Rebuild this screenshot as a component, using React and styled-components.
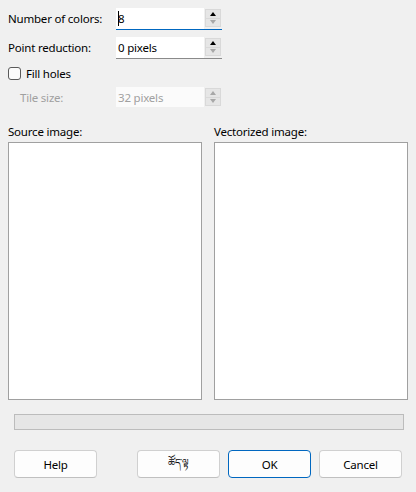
import React from "react";
import styled, { createGlobalStyle } from "styled-components";

const Global = createGlobalStyle`
  html, body { margin: 0; padding: 0; background: #f0f0f0; }
  body { font-family: "Noto Sans", "Segoe UI", sans-serif; font-size: 11.5px; letter-spacing: -0.2px; color: #000; }
`;

const Dialog = styled.div`
  width: 416px;
  height: 492px;
  box-sizing: border-box;
  padding: 8px 8px 0 8px;
  display: flex;
  flex-direction: column;
  background: #f0f0f0;
`;

const FieldRow = styled.div`
  display: flex;
  align-items: center;
  height: 22px;
  margin-top: ${(p) => p.$mt || 0}px;
`;

const Label = styled.span`
  width: ${(p) => (p.$indent ? 96 : 108)}px;
  padding-left: ${(p) => (p.$indent ? 12 : 0)}px;
  color: ${(p) => (p.$disabled ? "#a0a0a0" : "#000")};
  white-space: nowrap;
  line-height: 16px;
`;

const Field = styled.div`
  width: 106px;
  height: 22px;
  box-sizing: border-box;
  display: flex;
  align-items: stretch;
  border-bottom: 1px solid ${(p) => (p.$focused ? "#0067c0" : p.$disabled ? "transparent" : "#8a8a8a")};
  background: #f0f0f0;
`;

const TextArea = styled.div`
  flex: 1;
  background: ${(p) => (p.$disabled ? "#fbfbfb" : "#fff")};
  display: flex;
  align-items: center;
  padding-left: 2px;
  color: ${(p) => (p.$disabled ? "#a0a0a0" : "#000")};
  margin-bottom: ${(p) => (p.$disabled ? 1 : 0)}px;
`;

const Caret = styled.span`
  display: inline-block;
  width: 1px;
  height: 15px;
  background: #000;
  margin-right: -1px;
`;

const Spin = styled.div`
  width: 16px;
  margin: 1px 1px 2px 1px;
  display: flex;
  flex-direction: column;
`;

const SpinBtn = styled.div`
  flex: 1;
  box-sizing: border-box;
  background: #e6e6e6;
  border: 1px solid #d9d9d9;
  ${(p) => (p.$down ? "border-top: none;" : "")}
  display: flex;
  align-items: center;
  justify-content: center;
`;

const Arrow = styled.span`
  width: 0;
  height: 0;
  border-left: 3.5px solid transparent;
  border-right: 3.5px solid transparent;
  ${(p) =>
    p.$down
      ? `border-top: 4px solid ${p.$color};`
      : `border-bottom: 4px solid ${p.$color};`}
`;

const CheckRow = styled.label`
  display: flex;
  align-items: center;
  height: 16px;
  margin-top: 6px;
  gap: 5px;
`;

const CheckBox = styled.span`
  width: 13px;
  height: 13px;
  box-sizing: border-box;
  border: 1px solid #5a5a5a;
  border-radius: 3px;
  background: #fbfbfb;
`;

const Previews = styled.div`
  display: grid;
  grid-template-columns: 194px 194px;
  column-gap: 12px;
  margin-top: 15px;
`;

const PreviewCol = styled.div`
  display: flex;
  flex-direction: column;
`;

const PreviewLabel = styled.div`
  height: 18px;
  line-height: 16px;
`;

const PreviewBox = styled.div`
  height: 258px;
  box-sizing: border-box;
  border: 1px solid #a0a0a0;
  background: #fff;
`;

const Progress = styled.div`
  margin: 14px 4px 0 6px;
  height: 16px;
  box-sizing: border-box;
  border: 1px solid #bcbcbc;
  background: #e6e6e6;
`;

const Buttons = styled.div`
  display: flex;
  margin: 20px 0 0 6px;
  gap: 8px;
`;

const Button = styled.button`
  width: 83px;
  height: 28px;
  box-sizing: border-box;
  border: 1px solid ${(p) => (p.$primary ? "#0067c0" : "#d0d0d0")};
  border-bottom-color: ${(p) => (p.$primary ? "#0067c0" : "#c0c0c0")};
  border-radius: 4px;
  background: #fdfdfd;
  font-family: "Noto Sans", "Segoe UI", sans-serif;
  font-size: ${(p) => p.$fs || 11.5}px;
  letter-spacing: -0.2px;
  color: #000;
  padding: 0;
  margin-left: ${(p) => p.$ml || 0}px;
  cursor: default;
`;

function SpinField({ value, focused, disabled }) {
  const upColor = disabled ? "#a8a8a8" : "#000";
  const downColor = "#a8a8a8";
  return (
    <Field $focused={focused} $disabled={disabled}>
      <TextArea $disabled={disabled}>
        {focused && <Caret />}
        {value}
      </TextArea>
      <Spin>
        <SpinBtn>
          <Arrow $color={upColor} />
        </SpinBtn>
        <SpinBtn $down>
          <Arrow $down $color={downColor} />
        </SpinBtn>
      </Spin>
    </Field>
  );
}

export default function App() {
  return (
    <>
      <Global />
      <Dialog>
        <FieldRow>
          <Label>Number of colors:</Label>
          <SpinField value="8" focused />
        </FieldRow>
        <FieldRow $mt={7}>
          <Label>Point reduction:</Label>
          <SpinField value="0 pixels" />
        </FieldRow>
        <CheckRow>
          <CheckBox />
          <span>Fill holes</span>
        </CheckRow>
        <FieldRow $mt={6}>
          <Label $indent $disabled>
            Tile size:
          </Label>
          <SpinField value="32 pixels" disabled />
        </FieldRow>
        <Previews>
          <PreviewCol>
            <PreviewLabel>Source image:</PreviewLabel>
            <PreviewBox />
          </PreviewCol>
          <PreviewCol>
            <PreviewLabel>Vectorized image:</PreviewLabel>
            <PreviewBox />
          </PreviewCol>
        </Previews>
        <Progress />
        <Buttons>
          <Button>Help</Button>
          <Button $ml={32} $fs={10}>ཚོད་ལྟ</Button>
          <Button $primary>OK</Button>
          <Button>Cancel</Button>
        </Buttons>
      </Dialog>
    </>
  );
}
